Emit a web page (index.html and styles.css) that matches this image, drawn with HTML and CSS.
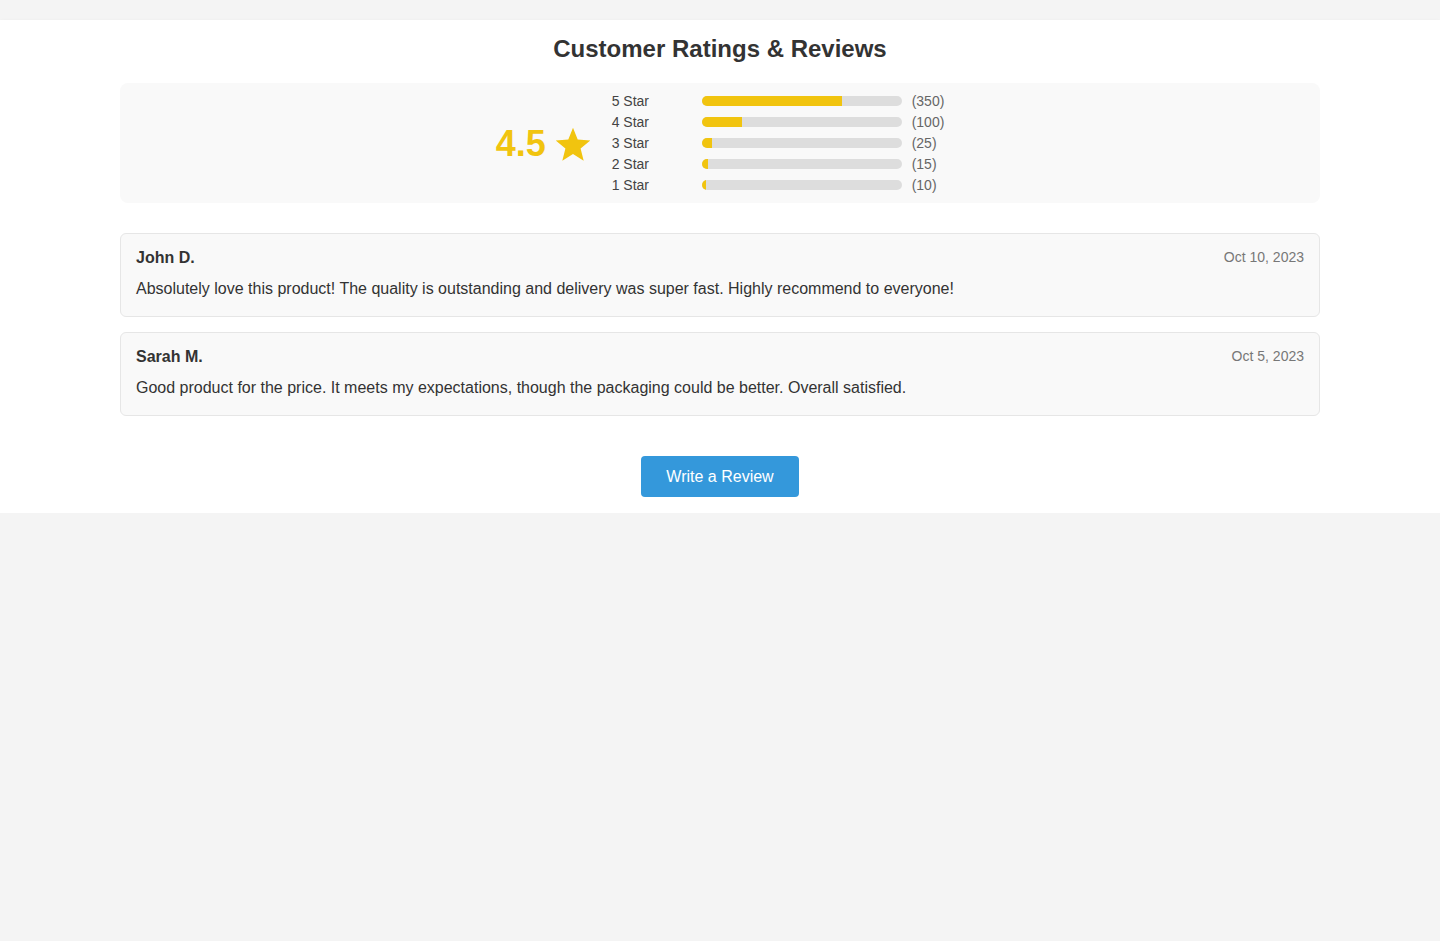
FILE: index.html
```html
<!DOCTYPE html>
<html lang="en">
<head>
<meta charset="utf-8">
<title>Customer Ratings &amp; Reviews</title>
<link rel="stylesheet" href="styles.css">
</head>
<body>
<div class="container">
  <h2 class="title">Customer Ratings &amp; Reviews</h2>
  <div class="inner">
    <div class="summary">
      <div class="average">
        <span class="score">4.5</span>
        <svg class="star" viewBox="0 0 24 24" width="38" height="37" aria-hidden="true"><path d="M12 1.2l3.05 7.6 8.15.55-6.27 5.2 2 7.95L12 18.1l-6.93 4.4 2-7.95L.8 9.35l8.15-.55z" fill="#f1c40f"/></svg>
      </div>
      <div class="bars">
        <div class="row"><span class="label">5 Star</span><div class="track"><div class="fill" style="width:70%"></div></div><span class="count">(350)</span></div>
        <div class="row"><span class="label">4 Star</span><div class="track"><div class="fill" style="width:20%"></div></div><span class="count">(100)</span></div>
        <div class="row"><span class="label">3 Star</span><div class="track"><div class="fill" style="width:5%"></div></div><span class="count">(25)</span></div>
        <div class="row"><span class="label">2 Star</span><div class="track"><div class="fill" style="width:3%"></div></div><span class="count">(15)</span></div>
        <div class="row"><span class="label">1 Star</span><div class="track"><div class="fill" style="width:2%"></div></div><span class="count">(10)</span></div>
      </div>
    </div>

    <div class="reviews">
      <div class="review">
        <div class="review-head"><span class="name">John D.</span><span class="date">Oct 10, 2023</span></div>
        <p class="text">Absolutely love this product! The quality is outstanding and delivery was super fast. Highly recommend to everyone!</p>
      </div>
      <div class="review">
        <div class="review-head"><span class="name">Sarah M.</span><span class="date">Oct 5, 2023</span></div>
        <p class="text">Good product for the price. It meets my expectations, though the packaging could be better. Overall satisfied.</p>
      </div>
    </div>

    <div class="actions">
      <button class="btn" type="button">Write a Review</button>
    </div>
  </div>
</div>
</body>
</html>
```
FILE: styles.css
```css
* { box-sizing: border-box; }
html, body { margin: 0; padding: 0; }
body {
  background: #f4f4f4;
  font-family: "Liberation Sans", Arial, sans-serif;
  color: #333;
  padding-top: 20px;
}
.container {
  background: #fff;
  box-shadow: 0 2px 4px rgba(0,0,0,0.1);
  padding: 15px 0 16px;
}
.title {
  margin: 0 0 20px;
  text-align: center;
  font-size: 24px;
  line-height: 28px;
  font-weight: bold;
  color: #333;
}
.inner {
  width: 1200px;
  margin: 0 auto;
}
.summary {
  background: #f9f9f9;
  border-radius: 8px;
  padding: 10px;
  display: flex;
  justify-content: center;
  align-items: center;
  gap: 20px;
}
.average {
  display: flex;
  align-items: center;
  gap: 8px;
  padding-top: 2px;
}
.score {
  font-size: 36px;
  font-weight: bold;
  color: #f1c40f;
  line-height: 40px;
}
.star { display: block; }
.bars {
  display: flex;
  flex-direction: column;
  gap: 5px;
}
.row {
  display: flex;
  align-items: center;
  height: 16px;
  font-size: 14px;
}
.label {
  width: 90px;
  color: #444;
}
.track {
  width: 200px;
  height: 10px;
  background: #ddd;
  border-radius: 5px;
  overflow: hidden;
}
.fill {
  height: 100%;
  background: #f1c40f;
}
.count {
  margin-left: 10px;
  color: #666;
}
.reviews {
  margin-top: 30px;
  display: flex;
  flex-direction: column;
  gap: 15px;
}
.review {
  background: #f9f9f9;
  border: 1px solid #e6e6e6;
  border-radius: 6px;
  padding: 15px;
}
.review-head {
  display: flex;
  justify-content: space-between;
  align-items: flex-start;
  margin-bottom: 10px;
  height: 18px;
}
.name {
  font-weight: bold;
  font-size: 16px;
  line-height: 18px;
  color: #333;
}
.date {
  font-size: 14px;
  line-height: 16px;
  color: #777;
}
.text {
  margin: 0;
  font-size: 16px;
  line-height: 24px;
  color: #333;
}
.actions {
  margin-top: 40px;
  display: flex;
  justify-content: center;
}
.btn {
  background: #3498db;
  color: #fff;
  border: none;
  border-radius: 4px;
  padding: 12px 25px;
  font-family: "Liberation Sans", Arial, sans-serif;
  font-size: 16px;
  line-height: 17px;
  cursor: pointer;
}
```
